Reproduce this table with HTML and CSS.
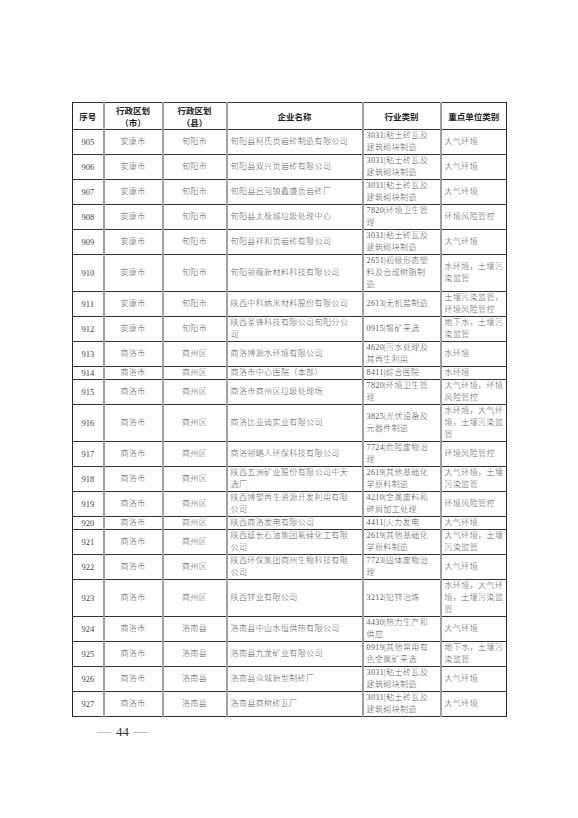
FILE: index.html
```html
<!DOCTYPE html>
<html lang="zh">
<head>
<meta charset="utf-8">
<link rel="stylesheet" href="styles.css">
</head>
<body>
<div class="page">
<table class="grid">
<colgroup>
<col class="c1"><col class="c2"><col class="c3"><col class="c4"><col class="c5"><col class="c6">
</colgroup>
<thead>
<tr><th>序号</th><th>行政区划<br>（市）</th><th>行政区划<br>（县）</th><th>企业名称</th><th>行业类别</th><th>重点单位类别</th></tr>
</thead>
<tbody>
<tr><td class="n">905</td><td class="m">安康市</td><td class="m">旬阳市</td><td class="l">旬阳县柯氏页岩砖制造有限公司</td><td class="l">3031|粘土砖瓦及<br>建筑砌块制造</td><td class="l">大气环境</td></tr>
<tr><td class="n">906</td><td class="m">安康市</td><td class="m">旬阳市</td><td class="l">旬阳县双兴页岩砖有限公司</td><td class="l">3031|粘土砖瓦及<br>建筑砌块制造</td><td class="l">大气环境</td></tr>
<tr><td class="n">907</td><td class="m">安康市</td><td class="m">旬阳市</td><td class="l">旬阳县吕河镇鑫盛页岩砖厂</td><td class="l">3031|粘土砖瓦及<br>建筑砌块制造</td><td class="l">大气环境</td></tr>
<tr><td class="n">908</td><td class="m">安康市</td><td class="m">旬阳市</td><td class="l">旬阳县太极城垃圾处理中心</td><td class="l">7820|环境卫生管<br>理</td><td class="l">环境风险管控</td></tr>
<tr><td class="n">909</td><td class="m">安康市</td><td class="m">旬阳市</td><td class="l">旬阳县祥和页岩砖有限公司</td><td class="l">3031|粘土砖瓦及<br>建筑砌块制造</td><td class="l">大气环境</td></tr>
<tr><td class="n">910</td><td class="m">安康市</td><td class="m">旬阳市</td><td class="l">旬阳领薇新材料科技有限公司</td><td class="l">2651|初级形态塑<br>料及合成树脂制<br>造</td><td class="l">水环境，土壤污<br>染监管</td></tr>
<tr><td class="n">911</td><td class="m">安康市</td><td class="m">旬阳市</td><td class="l">陕西中科纳米材料股份有限公司</td><td class="l">2613|无机盐制造</td><td class="l">土壤污染监管，<br>环境风险管控</td></tr>
<tr><td class="n">912</td><td class="m">安康市</td><td class="m">旬阳市</td><td class="l">陕西圣锋科技有限公司旬阳分公<br>司</td><td class="l">0915|锡矿采选</td><td class="l">地下水，土壤污<br>染监管</td></tr>
<tr><td class="n">913</td><td class="m">商洛市</td><td class="m">商州区</td><td class="l">商洛博源水环境有限公司</td><td class="l">4620|污水处理及<br>其再生利用</td><td class="l">水环境</td></tr>
<tr><td class="n">914</td><td class="m">商洛市</td><td class="m">商州区</td><td class="l">商洛市中心医院（本部）</td><td class="l">8411|综合医院</td><td class="l">水环境</td></tr>
<tr><td class="n">915</td><td class="m">商洛市</td><td class="m">商州区</td><td class="l">商洛市商州区垃圾处理场</td><td class="l">7820|环境卫生管<br>理</td><td class="l">大气环境，环境<br>风险管控</td></tr>
<tr><td class="n">916</td><td class="m">商洛市</td><td class="m">商州区</td><td class="l">商洛比亚迪实业有限公司</td><td class="l">3825|光伏设备及<br>元器件制造</td><td class="l">水环境，大气环<br>境，土壤污染监<br>管</td></tr>
<tr><td class="n">917</td><td class="m">商洛市</td><td class="m">商州区</td><td class="l">商洛领略人环保科技有限公司</td><td class="l">7724|危险废物治<br>理</td><td class="l">环境风险管控</td></tr>
<tr><td class="n">918</td><td class="m">商洛市</td><td class="m">商州区</td><td class="l">陕西五洲矿业股份有限公司中天<br>选厂</td><td class="l">2619|其他基础化<br>学原料制造</td><td class="l">大气环境，土壤<br>污染监管</td></tr>
<tr><td class="n">919</td><td class="m">商洛市</td><td class="m">商州区</td><td class="l">陕西博望再生资源开发利用有限<br>公司</td><td class="l">4210|金属废料和<br>碎屑加工处理</td><td class="l">环境风险管控</td></tr>
<tr><td class="n">920</td><td class="m">商洛市</td><td class="m">商州区</td><td class="l">陕西商洛发电有限公司</td><td class="l">4411|火力发电</td><td class="l">大气环境</td></tr>
<tr><td class="n">921</td><td class="m">商洛市</td><td class="m">商州区</td><td class="l">陕西延长石油集团氟硅化工有限<br>公司</td><td class="l">2619|其他基础化<br>学原料制造</td><td class="l">大气环境，土壤<br>污染监管</td></tr>
<tr><td class="n">922</td><td class="m">商洛市</td><td class="m">商州区</td><td class="l">陕西环保集团商州生物科技有限<br>公司</td><td class="l">7723|固体废物治<br>理</td><td class="l">大气环境</td></tr>
<tr><td class="n">923</td><td class="m">商洛市</td><td class="m">商州区</td><td class="l">陕西锌业有限公司</td><td class="l">3212|铅锌冶炼</td><td class="l">水环境，大气环<br>境，土壤污染监<br>管</td></tr>
<tr><td class="n">924</td><td class="m">商洛市</td><td class="m">洛南县</td><td class="l">洛南县中山水恒供热有限公司</td><td class="l">4430|热力生产和<br>供应</td><td class="l">大气环境</td></tr>
<tr><td class="n">925</td><td class="m">商洛市</td><td class="m">洛南县</td><td class="l">洛南县九龙矿业有限公司</td><td class="l">0919|其他常用有<br>色金属矿采选</td><td class="l">地下水，土壤污<br>染监管</td></tr>
<tr><td class="n">926</td><td class="m">商洛市</td><td class="m">洛南县</td><td class="l">洛南县众城新型制砖厂</td><td class="l">3031|粘土砖瓦及<br>建筑砌块制造</td><td class="l">大气环境</td></tr>
<tr><td class="n">927</td><td class="m">商洛市</td><td class="m">洛南县</td><td class="l">洛南县商树砖瓦厂</td><td class="l">3031|粘土砖瓦及<br>建筑砌块制造</td><td class="l">大气环境</td></tr>
</tbody>
</table>
<div class="folio"><span class="dash">—</span><span class="num">44</span><span class="dash">—</span></div>
</div>
</body>
</html>
```
FILE: styles.css
```css
html, body {
  margin: 0;
  padding: 0;
  background: #fff;
}
.page {
  padding: 102px 0 0 72px;
}
.grid {
  border-collapse: collapse;
  table-layout: fixed;
  width: 434px;
  border: 1px solid #222;
  font-family: "Liberation Serif", "Noto Sans CJK SC", serif;
  font-size: 8px;
  font-weight: 300;
  line-height: 12px;
  color: #5a5a5a;
}
.c1 { width: 31px; }
.c2 { width: 59px; }
.c3 { width: 64px; }
.c4 { width: 136px; }
.c5 { width: 78px; }
.c6 { width: 66px; }
.grid th, .grid td {
  border-top: 1px solid #333;
  border-bottom: 1px solid #333;
  border-left: 2px solid #a0a0a0;
  border-right: 2px solid #a0a0a0;
  padding: 0;
  vertical-align: middle;
  white-space: nowrap;
  overflow: hidden;
}
.grid th {
  font-family: "Noto Sans CJK SC", sans-serif;
  font-weight: 700;
  font-size: 8.5px;
  color: #222;
  padding: 1px 0;
  text-align: center;
}
.grid td.n { text-align: center; font-size: 8.5px; color: #444; }
.grid td.m { text-align: center; letter-spacing: 0.4px; }
.grid td.l { text-align: left; padding-left: 3px; letter-spacing: 0.4px; }
.grid tr > :first-child { border-left: 1px solid #222; }
.grid tr > :last-child { border-right: 1px solid #222; }
.folio {
  display: flex;
  align-items: center;
  gap: 5px;
  margin: 7px 0 0 25px;
  font-family: "Liberation Serif", serif;
  font-size: 13px;
  color: #333;
}
.folio .dash { color: #888; font-size: 14px; }
```
